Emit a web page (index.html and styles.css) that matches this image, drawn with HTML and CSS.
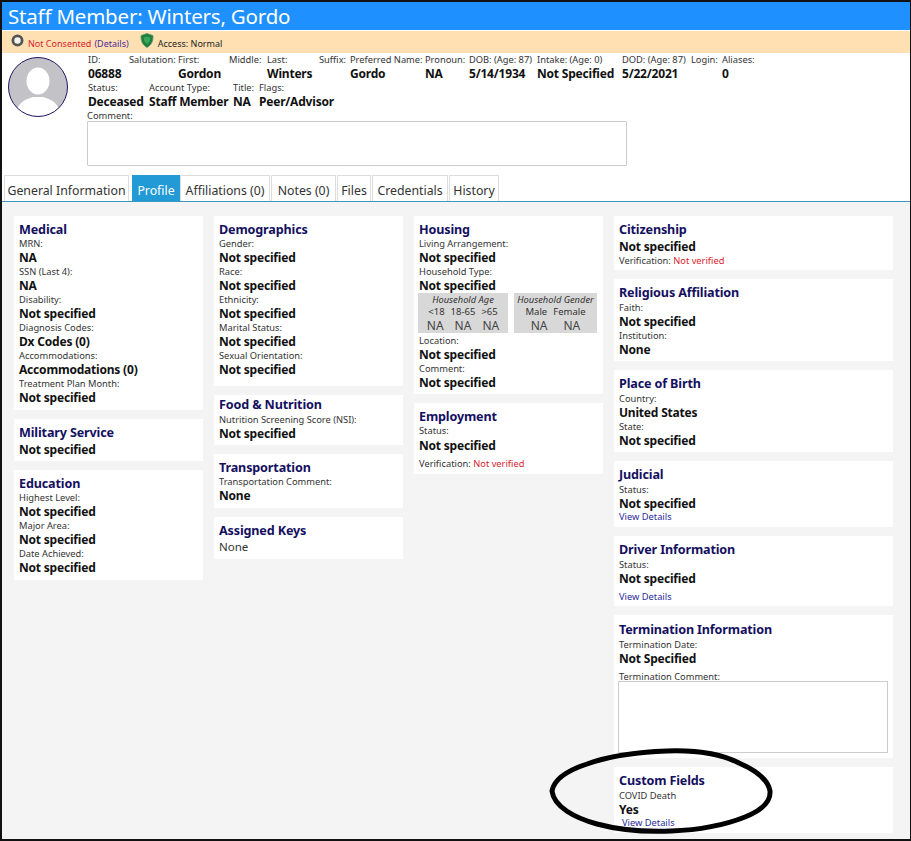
FILE: index.html
```html
<!DOCTYPE html>
<html lang="en">
<head>
    <meta charset="UTF-8">
    <meta name="viewport" content="width=device-width, initial-scale=1.0">
    <title>Staff Member: Winters, Gordo</title>
    <link rel="stylesheet" href="styles.css">
</head>
<body>
    <div class="frame">
        <h1 class="page-title">Staff Member: Winters, Gordo</h1>

        <div class="status-bar">
            <svg class="consent-icon" width="14" height="13" viewBox="0 0 14 13"><circle cx="6.5" cy="6.5" r="4.6" fill="#f4f4ee" stroke="#555" stroke-width="2.8"/></svg>
            <span class="red">Not Consented</span>
            <a class="details-link">(Details)</a>
            <svg class="shield-icon" width="14" height="15" viewBox="0 0 14 15"><path d="M7 .5 13 2.6C13.3 8 11.5 12 7 14.5 2.5 12 .7 8 1 2.6Z" fill="#1f7d3d" stroke="#5a9a6a" stroke-width=".8"/><path d="M7 3.5 10.2 4.6C10.3 7.5 9.4 9.6 7 11 4.6 9.6 3.7 7.5 3.8 4.6Z" fill="#3aa65a"/></svg>
            <span class="access">Access: Normal</span>
        </div>

        <!-- Person summary -->
        <div class="summary">
            <svg class="avatar" width="60" height="60" viewBox="0 0 60 60">
                <defs><clipPath id="avatar-clip"><circle cx="30" cy="30" r="29.5"/></clipPath></defs>
                <circle cx="30" cy="30" r="29.5" fill="#c3c3c7"/>
                <g clip-path="url(#avatar-clip)" fill="#fff">
                    <ellipse cx="30" cy="24" rx="11.5" ry="13.5"/>
                    <path d="M8 60C8 47 15 43 25 40H35C45 43 52 47 52 60Z"/>
                </g>
                <circle cx="30" cy="30" r="29.5" fill="none" stroke="#1c1464" stroke-width="1"/>
            </svg>
            <div class="summary-fields">
                <div class="field-row row-one">
                    <div><label>ID:</label><b>06888</b></div>
                    <div><label>Salutation:</label><b></b></div>
                    <div><label>First:</label><b>Gordon</b></div>
                    <div><label>Middle:</label><b></b></div>
                    <div><label>Last:</label><b>Winters</b></div>
                    <div><label>Suffix:</label><b></b></div>
                    <div><label>Preferred Name:</label><b>Gordo</b></div>
                    <div><label>Pronoun:</label><b>NA</b></div>
                    <div><label>DOB: (Age: 87)</label><b>5/14/1934</b></div>
                    <div><label>Intake: (Age: 0)</label><b>Not Specified</b></div>
                    <div><label>DOD: (Age: 87)</label><b>5/22/2021</b></div>
                    <div><label>Login:</label><b></b></div>
                    <div><label>Aliases:</label><b>0</b></div>
                </div>
                <div class="field-row row-two">
                    <div><label>Status:</label><b>Deceased</b></div>
                    <div><label>Account Type:</label><b>Staff Member</b></div>
                    <div><label>Title:</label><b>NA</b></div>
                    <div><label>Flags:</label><b>Peer/Advisor</b></div>
                </div>
                <label class="comment-label">Comment:</label>
                <div class="comment-box"></div>
            </div>
        </div>

        <div class="tabs">
            <button class="tab tab-general">General Information</button>
            <button class="tab tab-profile active">Profile</button>
            <button class="tab tab-affiliations">Affiliations (0)</button>
            <button class="tab tab-notes">Notes (0)</button>
            <button class="tab tab-files">Files</button>
            <button class="tab tab-credentials">Credentials</button>
            <button class="tab tab-history">History</button>
        </div>

        <div class="profile-grid">
            <div class="column">
                <section class="card">
                    <h3>Medical</h3>
                    <label>MRN:</label><b>NA</b>
                    <label>SSN (Last 4):</label><b>NA</b>
                    <label>Disability:</label><b>Not specified</b>
                    <label>Diagnosis Codes:</label><b>Dx Codes (0)</b>
                    <label>Accommodations:</label><b>Accommodations (0)</b>
                    <label>Treatment Plan Month:</label><b>Not specified</b>
                </section>
                <section class="card card-short">
                    <h3>Military Service</h3>
                    <b class="after-title">Not specified</b>
                </section>
                <section class="card">
                    <h3>Education</h3>
                    <label>Highest Level:</label><b>Not specified</b>
                    <label>Major Area:</label><b>Not specified</b>
                    <label>Date Achieved:</label><b>Not specified</b>
                </section>
            </div>

            <div class="column">
                <section class="card card-tall">
                    <h3>Demographics</h3>
                    <label>Gender:</label><b>Not specified</b>
                    <label>Race:</label><b>Not specified</b>
                    <label>Ethnicity:</label><b>Not specified</b>
                    <label>Marital Status:</label><b>Not specified</b>
                    <label>Sexual Orientation:</label><b>Not specified</b>
                </section>
                <section class="card card-food">
                    <h3>Food &amp; Nutrition</h3>
                    <label>Nutrition Screening Score (NSI):</label><b>Not specified</b>
                </section>
                <section class="card">
                    <h3>Transportation</h3>
                    <label>Transportation Comment:</label><b>None</b>
                </section>
                <section class="card card-short">
                    <h3>Assigned Keys</h3>
                    <span class="plain after-title">None</span>
                </section>
            </div>

            <div class="column">
                <section class="card card-housing">
                    <h3>Housing</h3>
                    <label>Living Arrangement:</label><b>Not specified</b>
                    <label>Household Type:</label><b>Not specified</b>
                    <div class="household">
                        <div class="household-box box-age">
                            <em>Household Age</em>
                            <div class="household-row"><span>&lt;18</span><span>18-65</span><span>&gt;65</span></div>
                            <div class="household-row big"><span>NA</span><span>NA</span><span>NA</span></div>
                        </div>
                        <div class="household-box box-gender">
                            <em>Household Gender</em>
                            <div class="household-row"><span>Male</span><span>Female</span></div>
                            <div class="household-row big"><span>NA</span><span>NA</span></div>
                        </div>
                    </div>
                    <label>Location:</label><b>Not specified</b>
                    <label>Comment:</label><b>Not specified</b>
                </section>
                <section class="card card-employment">
                    <h3>Employment</h3>
                    <label>Status:</label><b class="nudge">Not specified</b>
                    <label class="verify">Verification: <span class="red">Not verified</span></label>
                </section>
            </div>

            <div class="column">
                <section class="card card-citizen">
                    <h3>Citizenship</h3>
                    <b class="after-title">Not specified</b>
                    <label>Verification: <span class="red">Not verified</span></label>
                </section>
                <section class="card card-wide">
                    <h3>Religious Affiliation</h3>
                    <label>Faith:</label><b>Not specified</b>
                    <label>Institution:</label><b>None</b>
                </section>
                <section class="card card-wide">
                    <h3>Place of Birth</h3>
                    <label>Country:</label><b>United States</b>
                    <label>State:</label><b>Not specified</b>
                </section>
                <section class="card card-judicial">
                    <h3>Judicial</h3>
                    <label>Status:</label><b>Not specified</b>
                    <a class="view-link">View Details</a>
                </section>
                <section class="card card-driver">
                    <h3>Driver Information</h3>
                    <label>Status:</label><b>Not specified</b>
                    <a class="view-link">View Details</a>
                </section>
                <section class="card card-termination">
                    <h3>Termination Information</h3>
                    <label>Termination Date:</label><b>Not Specified</b>
                    <label class="term-label">Termination Comment:</label>
                    <div class="term-box"></div>
                </section>
                <section class="card card-custom">
                    <h3>Custom Fields</h3>
                    <label>COVID Death</label><b>Yes</b>
                    <a class="view-link indent">View Details</a>
                </section>
            </div>
        </div>

        <!-- hand drawn marker circle over the screenshot -->
        <svg class="marker" width="226" height="92" viewBox="0 0 226 92">
            <path d="M3 46C5 34 20 25 38 19 60 11 90 7 118 6 146 5 172 9 190 18 206 25 219 34 221 46 222 57 211 66 196 72 176 80 150 85 122 86 96 87 70 85 48 79 26 73 5 62 3 46Z" fill="none" stroke="#000" stroke-width="5" stroke-linejoin="round"/>
        </svg>
    </div>
</body>
</html>
```

FILE: styles.css
```css
* {
    box-sizing: border-box;
}

html, body {
    margin: 0;
    padding: 0;
}

body {
    font-family: "Noto Sans", "Open Sans", sans-serif;
    background-color: #fff;
    color: #111;
}

.frame {
    position: relative;
    width: 911px;
    height: 841px;
    overflow: hidden;
    border: 2px solid #111;
    border-right-width: 1px;
    background-color: #fff;
}

.page-title {
    margin: 0;
    height: 28px;
    padding-left: 6px;
    background-color: #1e90ff;
    color: #fff;
    font-size: 20.5px;
    font-weight: 400;
    letter-spacing: -0.2px;
    line-height: 28px;
}

.status-bar {
    display: flex;
    align-items: center;
    height: 22px;
    margin-top: 1px;
    padding: 2px 0 0 9px;
    background-color: #ffe0b3;
    font-size: 9px;
    white-space: pre;
}

.consent-icon {
    margin-right: 3px;
    margin-top: -5px;
}

.details-link {
    margin-left: 3px;
    color: #4b2a9a;
}

.shield-icon {
    margin-left: 11px;
    margin-top: -5px;
}

.access {
    margin-left: 4px;
    color: #222;
}

.red {
    color: #d9232d;
}

.summary {
    display: flex;
    height: 122px;
    padding: 4px 0 0 6px;
}

.avatar {
    flex: none;
}

.summary-fields {
    width: 800px;
    margin: -5px 0 0 20px;
}

.summary-fields label,
.card label {
    display: block;
    height: 14px;
    color: #333;
    font-size: 9.3px;
    line-height: 16px;
    white-space: nowrap;
}

.summary-fields b,
.card b {
    display: block;
    height: 14px;
    color: #111;
    font-size: 12px;
    font-weight: 700;
    letter-spacing: -0.2px;
    line-height: 16px;
    white-space: nowrap;
}

.field-row {
    display: grid;
}

.row-one {
    grid-template-columns: 41px 49px 51px 38px 52px 31px 75px 44px 68px 85px 69px 31px auto;
}

.row-two {
    grid-template-columns: 61px 84px 26px auto;
}

.summary-fields .comment-label {
    margin-left: -1px;
}

.comment-box {
    width: 540px;
    height: 45px;
    margin: -1px 0 0 -1px;
    border: 1px solid #ccc;
    border-radius: 1px;
    background-color: #fff;
}

.tabs {
    display: flex;
    height: 27px;
    padding-left: 2px;
    border-bottom: 1px solid #3a98bf;
}

.tab {
    height: 26px;
    margin-right: 1px;
    padding: 3px 0 0;
    border: 1px solid #ddd;
    border-bottom: none;
    background-color: #fff;
    color: #333;
    font-family: inherit;
    font-size: 12.3px;
}

.tab.active {
    border-color: #219ad6;
    background-color: #219ad6;
    color: #fff;
}

.tab-general { width: 125px; margin-right: 3px; }
.tab-profile { width: 48px; margin-right: 0; }
.tab-affiliations { width: 90px; }
.tab-notes { width: 65px; }
.tab-files { width: 34px; }
.tab-credentials { width: 76px; }
.tab-history { width: 50px; }

.profile-grid {
    display: grid;
    grid-template-columns: 189px 189px 189px 279px;
    gap: 11px;
    height: 638px;
    padding: 14px 0 0 12px;
    background-color: #f4f4f4;
}

.column {
    display: flex;
    flex-direction: column;
    gap: 9px;
}

.card {
    padding: 6px 5px;
    background-color: #fff;
}

.card h3 {
    margin: 0;
    height: 14px;
    color: #14105f;
    font-size: 12.6px;
    font-weight: 700;
    letter-spacing: -0.15px;
    line-height: 16px;
    white-space: nowrap;
}

.card .after-title {
    margin-top: 3px;
}

.card .plain {
    display: block;
    font-size: 11.5px;
    line-height: 14px;
    color: #333;
}

.card-short {
    padding-bottom: 5px;
}

.card-tall {
    padding-bottom: 10px;
}

.card-food {
    padding-top: 2px;
    padding-bottom: 5px;
}

.card-food label {
    margin-top: 1px;
}

.card-housing {
    height: 178px;
}

.card-employment {
    height: 71px;
}

.card .nudge {
    margin-top: 1px;
}

.card .verify {
    margin-top: 4px;
}

.card-citizen {
    height: 54px;
}

.card-wide {
    height: 82px;
}

.card-wide label:first-of-type,
.card-judicial label:first-of-type,
.card-driver label:first-of-type,
.card-custom label:first-of-type,
.card-termination label:first-of-type {
    margin-top: 1px;
}

.card-judicial {
    height: 66px;
}

.card-driver {
    height: 70px;
}

.card-driver .view-link {
    margin-top: 5px;
}

.card-termination {
    height: 143px;
    padding-top: 7px;
}

.card .term-label {
    margin-top: 4px;
}

.term-box {
    width: 270px;
    height: 72px;
    margin: -2px 0 0 -1px;
    border: 1px solid #ccc;
    background-color: #fff;
}

.card-custom {
    height: 66px;
}

.view-link {
    display: block;
    height: 14px;
    color: #2b2b9a;
    font-size: 9.3px;
    line-height: 14px;
}

.view-link.indent {
    margin-left: 3px;
}

/* household boxes */
.household {
    display: flex;
    gap: 6px;
    margin: 1px 0 0 -1px;
}

.household-box {
    height: 40px;
    background-color: #d8d8d8;
    text-align: center;
}

.box-age {
    width: 90px;
}

.box-gender {
    width: 83px;
}

.household-box em {
    display: block;
    height: 13px;
    color: #333;
    font-size: 9.3px;
    line-height: 13px;
    white-space: nowrap;
}

.household-row {
    display: flex;
    justify-content: center;
    gap: 6px;
    height: 12px;
    color: #333;
    font-size: 9.5px;
    line-height: 12px;
}

.household-row.big {
    gap: 11px;
    height: 15px;
    color: #444;
    font-size: 12px;
    line-height: 15px;
}

.box-gender .household-row.big {
    gap: 16px;
}

.marker {
    position: absolute;
    left: 547px;
    top: 743px;
}
```
